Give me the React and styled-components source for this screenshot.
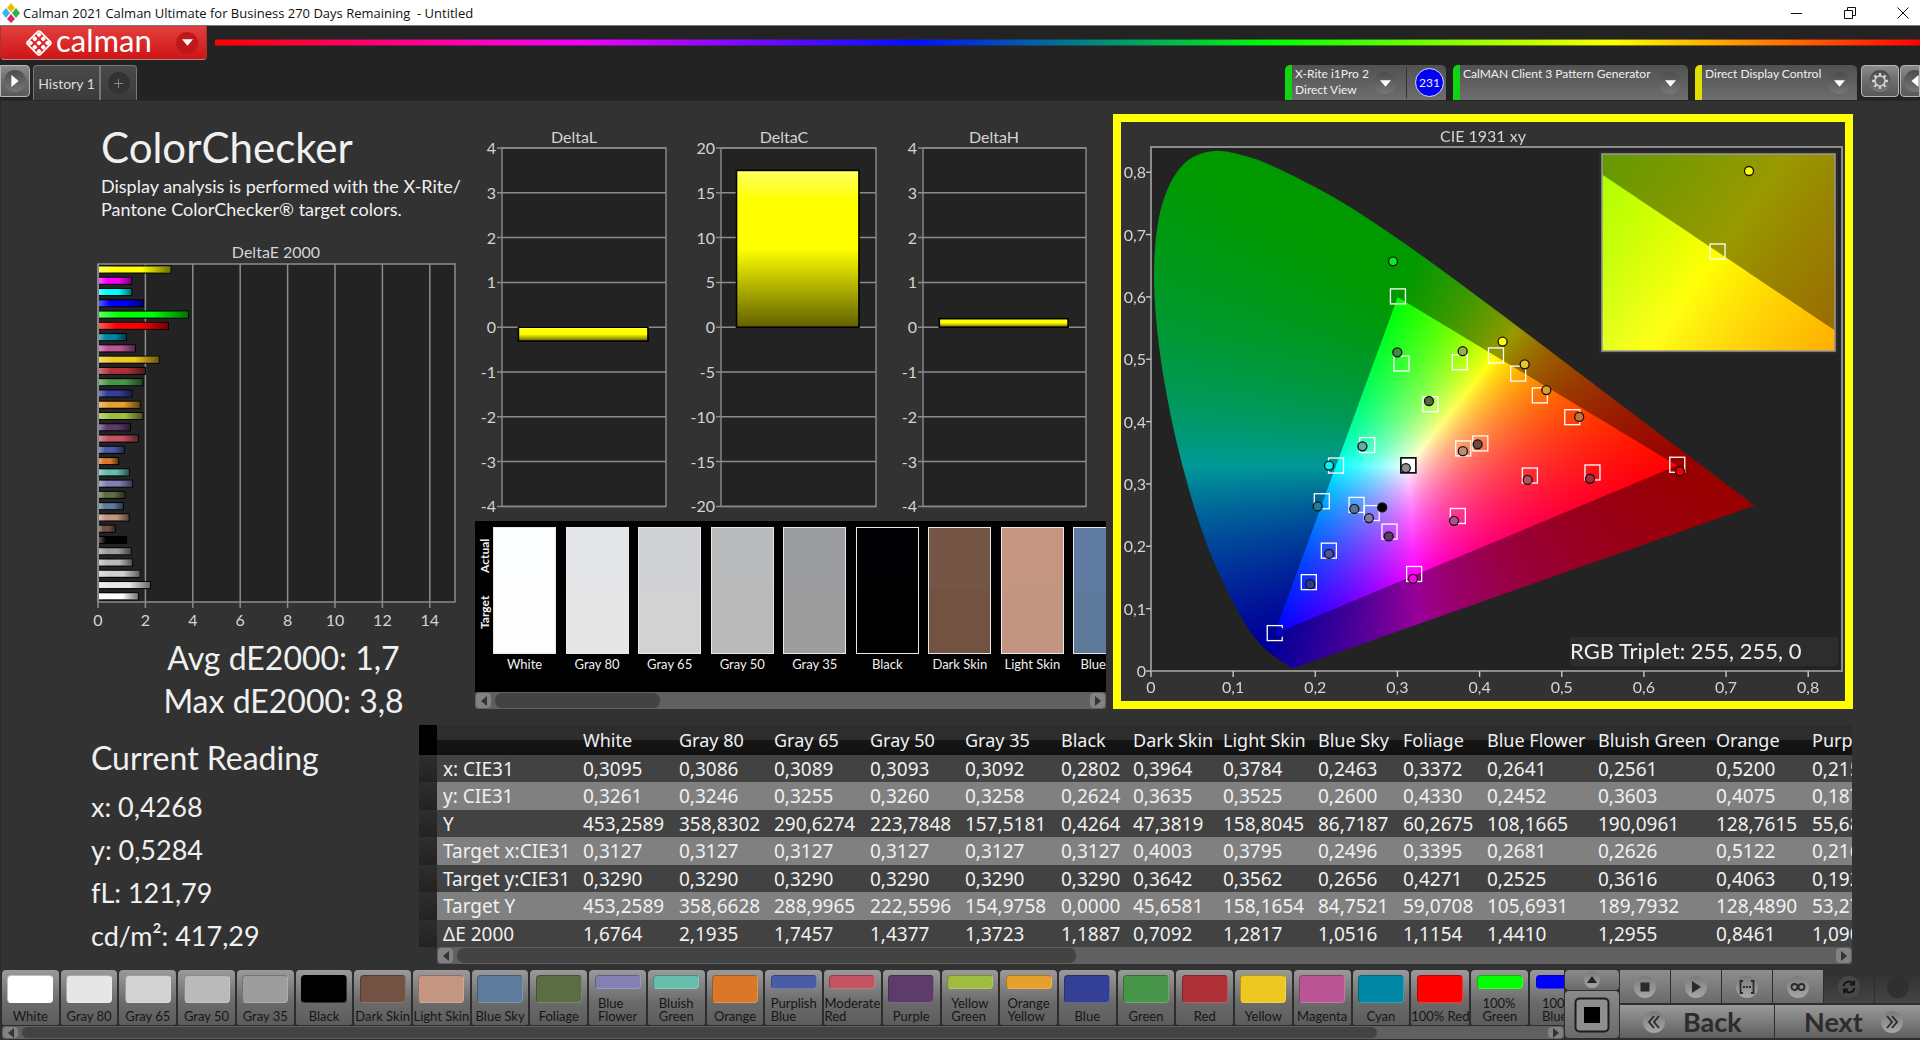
import React, { useEffect, useRef } from 'react';
import styled, { createGlobalStyle, css } from 'styled-components';

const GlobalStyle = createGlobalStyle`
  * { box-sizing: border-box; }
  html, body, #root { height: 100%; }
  body {
    margin: 0;
    background: #323232;
    color: #f0f0f0;
    font-family: 'Lato', 'Liberation Sans', sans-serif;
    overflow: hidden;
  }
  button { font: inherit; color: inherit; border: 0; padding: 0; margin: 0; background: none; }
`;

/* ---------- data ---------- */

const PATCHES = [
  { name: 'White', color: '#ffffff', actual: '#fcfdff', target: '#fdfdfd', de: 1.6764 },
  { name: 'Gray 80', color: '#e6e6e6', actual: '#e4e5e8', target: '#e6e6e6', de: 2.1935 },
  { name: 'Gray 65', color: '#d2d2d2', actual: '#d0d1d5', target: '#d2d2d2', de: 1.7457 },
  { name: 'Gray 50', color: '#bababa', actual: '#b9bbbc', target: '#bababa', de: 1.4377 },
  { name: 'Gray 35', color: '#9d9d9d', actual: '#9c9da1', target: '#9d9d9d', de: 1.3723 },
  { name: 'Black', color: '#000000', actual: '#010104', target: '#000000', de: 1.1887 },
  { name: 'Dark Skin', color: '#735244', actual: '#755546', target: '#735242', de: 0.7092 },
  { name: 'Light Skin', color: '#c49682', actual: '#c49682', target: '#c29582', de: 1.2817 },
  { name: 'Blue Sky', color: '#5e7b9d', actual: '#5f7ba2', target: '#5e7a9b', de: 1.0516 },
  { name: 'Foliage', color: '#5a6d43', de: 1.1154 },
  { name: 'Blue Flower', color: '#8380b2', de: 1.441, small: true },
  { name: 'Bluish Green', color: '#64beab', de: 1.2955, small: true },
  { name: 'Orange', color: '#d97828', de: 0.8461 },
  { name: 'Purplish Blue', color: '#4a5ba7', de: 1.09, small: true },
  { name: 'Moderate Red', color: '#c35361', de: 1.68, small: true },
  { name: 'Purple', color: '#5d3c6c', de: 1.35 },
  { name: 'Yellow Green', color: '#a0bc40', de: 1.87, small: true },
  { name: 'Orange Yellow', color: '#e6a12d', de: 1.75, small: true },
  { name: 'Blue', color: '#343f96', de: 1.42 },
  { name: 'Green', color: '#479549', de: 1.87 },
  { name: 'Red', color: '#b03038', de: 1.98 },
  { name: 'Yellow', color: '#edc821', de: 2.55 },
  { name: 'Magenta', color: '#bb5594', de: 1.56 },
  { name: 'Cyan', color: '#0087a5', de: 1.18 },
  { name: '100% Red', color: '#ff0000', de: 2.95 },
  { name: '100% Green', color: '#00ff00', de: 3.8, small: true },
  { name: '100% Blue', color: '#0000ff', de: 1.9, small: true },
  { name: '100% Cyan', color: '#00ffff', de: 1.4, small: true },
  { name: '100% Magenta', color: '#ff00ff', de: 1.4, small: true },
  { name: '100% Yellow', color: '#ffff00', de: 3.05, small: true },
];

const COLUMNS = [
  { name: 'White', width: 96 },
  { name: 'Gray 80', width: 95 },
  { name: 'Gray 65', width: 96 },
  { name: 'Gray 50', width: 95 },
  { name: 'Gray 35', width: 96 },
  { name: 'Black', width: 72 },
  { name: 'Dark Skin', width: 90 },
  { name: 'Light Skin', width: 95 },
  { name: 'Blue Sky', width: 85 },
  { name: 'Foliage', width: 84 },
  { name: 'Blue Flower', width: 111 },
  { name: 'Bluish Green', width: 118 },
  { name: 'Orange', width: 96 },
  { name: 'Purplish Blue', width: 120 },
];

const ROWS = [
  ['x: CIE31', '0,3095', '0,3086', '0,3089', '0,3093', '0,3092', '0,2802', '0,3964', '0,3784', '0,2463', '0,3372', '0,2641', '0,2561', '0,5200', '0,2155'],
  ['y: CIE31', '0,3261', '0,3246', '0,3255', '0,3260', '0,3258', '0,2624', '0,3635', '0,3525', '0,2600', '0,4330', '0,2452', '0,3603', '0,4075', '0,1878'],
  ['Y', '453,2589', '358,8302', '290,6274', '223,7848', '157,5181', '0,4264', '47,3819', '158,8045', '86,7187', '60,2675', '108,1665', '190,0961', '128,7615', '55,6841'],
  ['Target x:CIE31', '0,3127', '0,3127', '0,3127', '0,3127', '0,3127', '0,3127', '0,4003', '0,3795', '0,2496', '0,3395', '0,2681', '0,2626', '0,5122', '0,2164'],
  ['Target y:CIE31', '0,3290', '0,3290', '0,3290', '0,3290', '0,3290', '0,3290', '0,3642', '0,3562', '0,2656', '0,4271', '0,2525', '0,3616', '0,4063', '0,1922'],
  ['Target Y', '453,2589', '358,6628', '288,9965', '222,5596', '154,9758', '0,0000', '45,6581', '158,1654', '84,7521', '59,0708', '105,6931', '189,7932', '128,4890', '53,2718'],
  ['ΔE 2000', '1,6764', '2,1935', '1,7457', '1,4377', '1,3723', '1,1887', '0,7092', '1,2817', '1,0516', '1,1154', '1,4410', '1,2955', '0,8461', '1,0902'],
];

const LOCUS = [
  [0.1741, 0.005], [0.1714, 0.0051], [0.1644, 0.0109], [0.1566, 0.0177], [0.144, 0.0297],
  [0.1355, 0.0399], [0.1241, 0.0578], [0.1096, 0.0868], [0.0913, 0.1327], [0.0687, 0.2007],
  [0.0454, 0.295], [0.0235, 0.4127], [0.0082, 0.5384], [0.0039, 0.6548], [0.0139, 0.7502],
  [0.0389, 0.812], [0.0743, 0.8338], [0.1142, 0.8262], [0.1547, 0.8059], [0.2296, 0.7543],
  [0.3016, 0.6923], [0.3731, 0.6245], [0.4441, 0.5547], [0.5125, 0.4866], [0.5752, 0.4242],
  [0.627, 0.3725], [0.6658, 0.334], [0.6915, 0.3083], [0.719, 0.2809], [0.7347, 0.2653],
];

const TARGETS = [
  [0.3, 0.6], [0.3043, 0.4924], [0.3753, 0.4943], [0.4193, 0.5053], [0.3395, 0.4271],
  [0.4003, 0.3642], [0.3795, 0.3562], [0.2626, 0.3616], [0.2246, 0.3287], [0.2073, 0.2715],
  [0.2496, 0.2656], [0.2681, 0.2525], [0.2897, 0.2228], [0.3729, 0.2478], [0.2159, 0.1922],
  [0.1915, 0.1417], [0.3197, 0.1548], [0.15, 0.06], [0.4463, 0.4762], [0.4727, 0.4412],
  [0.5122, 0.4063], [0.64, 0.33], [0.4606, 0.3127], [0.5368, 0.3176],
];

const READINGS = [
  [0.2934, 0.6571, '#00f020'], [0.2986, 0.5111, '#3f8b45'], [0.3782, 0.513, '#9aae45'],
  [0.4268, 0.5284, '#ffff00'], [0.3372, 0.433, '#55663f'], [0.2561, 0.3603, '#64ab98'],
  [0.2155, 0.3295, '#00f5f5'], [0.2017, 0.264, '#14809c'], [0.2463, 0.26, '#5a7594'],
  [0.2641, 0.2452, '#7e7ba8'], [0.2802, 0.2624, '#000000'], [0.2881, 0.2159, '#59386a'],
  [0.3676, 0.2409, '#b14f8c'], [0.2155, 0.1878, '#47559d'], [0.1927, 0.1392, '#30398a'],
  [0.3177, 0.1479, '#ff00f0'], [0.1554, 0.0618, '#0000f0'], [0.309, 0.3255, '#8f8f8f'],
  [0.3964, 0.3635, '#6d4d41'], [0.3784, 0.3525, '#bb8f7c'], [0.4536, 0.4918, '#e6c32b'],
  [0.48, 0.4506, '#dd9c30'], [0.52, 0.4075, '#cc7230'], [0.6427, 0.3201, '#ee0000'],
  [0.4573, 0.3064, '#ba4f5d'], [0.5332, 0.3083, '#a82d36'],
];

/* ---------- shared parts ---------- */

const roundShade = css`
  display: inline-flex;
  align-items: center;
  justify-content: center;
  flex: none;
  border-radius: 50%;
`;

const Round = styled.span`
  ${roundShade}
  width: ${(p) => p.$size || 22}px;
  height: ${(p) => p.$size || 22}px;
  margin-left: ${(p) => (p.$end ? 'auto' : '0')};
  background: ${(p) => p.$bg || 'linear-gradient(#4c4c4c, #777)'};
`;

const Track = styled.div`
  display: flex;
  align-items: center;
  gap: 4px;
  height: ${(p) => p.$height || 17}px;
  background: #606060;
  border-radius: 3px;
  padding: 1px;
`;

const TrackButton = styled.button`
  display: flex;
  align-items: center;
  justify-content: center;
  width: 15px;
  height: 100%;
  border-radius: 4px;
  background: #828282;
`;

const TrackRail = styled.div`
  flex: 1;
  height: 100%;
`;

const Thumb = styled.div`
  width: ${(p) => p.$size}%;
  height: 100%;
  border-radius: 7px;
  background: #434343;
`;

function Caret({ dir, size = 10, fill = '#fff' }) {
  const points = {
    down: '0,2 10,2 5,8',
    up: '0,8 10,8 5,1',
    left: '8,0 8,10 2,5',
    right: '2,0 2,10 8,5',
  };
  return (
    <svg width={size} height={size} viewBox="0 0 10 10" aria-hidden="true">
      <polygon points={points[dir]} fill={fill} />
    </svg>
  );
}

function ScrollBar({ label, size, height }) {
  return (
    <Track $height={height}>
      <TrackButton type="button" aria-label={`${label} left`}><Caret dir="left" fill="#333" /></TrackButton>
      <TrackRail><Thumb $size={size} /></TrackRail>
      <TrackButton type="button" aria-label={`${label} right`}><Caret dir="right" fill="#333" /></TrackButton>
    </Track>
  );
}

/* ---------- window chrome ---------- */

const Page = styled.div`
  display: flex;
  flex-direction: column;
  min-height: 100%;
  overflow: hidden;
`;

const TitleBar = styled.header`
  display: flex;
  align-items: center;
  height: 25px;
  padding-left: 2px;
  gap: 3px;
  background: #fff;
  color: #111;
  font-family: 'Open Sans', 'Noto Sans', sans-serif;
  font-size: 13px;
  white-space: pre;
`;

const WindowButtons = styled.div`
  display: flex;
  gap: 19px;
  margin-left: auto;
  button {
    width: 34px;
    height: 25px;
    display: flex;
    align-items: center;
    justify-content: center;
  }
`;

const Ribbon = styled.div`
  display: grid;
  grid-template-columns: 207px 1fr;
  column-gap: 8px;
  height: 36px;
  background: #232323;
  border-top: 1px solid #777;
`;

const Brand = styled.button`
  display: flex;
  align-items: center;
  height: 34px;
  padding: 0 8px 0 24px;
  gap: 3px;
  border: 1px solid #a33;
  border-top: 0;
  border-bottom: 1px solid #a88;
  border-radius: 0 0 4px 4px;
  background: linear-gradient(#e2403f, #cf1414);
`;

const Spectrum = styled.div`
  align-self: start;
  margin-top: 13px;
  height: 7px;
  border: 1px solid rgba(40, 40, 40, 0.6);
  border-width: 1px 0;
  background: linear-gradient(90deg, #ff0000 0%, #ff00d0 17%, #f000ff 22%, #0010ff 41%, #00ff00 62%, #ffff00 82%, #ff0000 100%);
`;

const TabBar = styled.div`
  display: flex;
  align-items: flex-start;
  height: 39px;
  padding-top: 4px;
  background: #232323;
`;

const SideButton = styled.button`
  display: flex;
  align-items: center;
  justify-content: ${(p) => (p.$cut ? 'flex-start' : 'center')};
  width: ${(p) => p.$width}px;
  height: 32px;
  padding-left: ${(p) => (p.$cut ? 3 : 0)}px;
  margin-left: ${(p) => p.$gap || 0}px;
  overflow: hidden;
  border: 1px solid #b5b5b5;
  border-radius: ${(p) => p.$radius || '4px'};
  background: linear-gradient(#8c8c8c, #6b6b6b 50%, #5a5a5a);
`;

const Tab = styled.button`
  display: flex;
  align-items: center;
  justify-content: center;
  width: ${(p) => p.$width}px;
  height: 35px;
  border: 1px solid #777;
  border-bottom: 0;
  border-radius: ${(p) => p.$radius};
  margin-left: ${(p) => p.$gap || 0}px;
  background: linear-gradient(#4a4a4a, #3a3a3a);
  color: #dcdcdc;
  font-size: 14px;
`;

const Devices = styled.div`
  display: flex;
  margin-left: auto;
  gap: 7px;
`;

const Device = styled.button`
  display: flex;
  width: ${(p) => p.$width}px;
  height: 35px;
  border-radius: 5px 5px 0 0;
  overflow: hidden;
  border-left: 7px solid ${(p) => p.$accent};
  background: linear-gradient(#515151, #6e6e6e);
  padding: 1px 7px 0 3px;
  font-size: 12px;
  line-height: 16px;
  text-align: left;
  white-space: pre;
  > span:nth-child(2) { margin-left: auto; margin-top: 6px; }
`;

const Count = styled.span`
  display: flex;
  align-items: center;
  height: 31px;
  margin: 1px -5px 0 10px;
  padding-left: 8px;
  border-left: 1px solid #333;
  b {
    ${roundShade}
    width: 29px;
    height: 29px;
    border: 1px solid #dde;
    background: #0000f5;
    font-size: 12px;
    font-weight: 400;
  }
`;

function BrandMark() {
  const cells = [];
  for (let r = 0; r < 3; r += 1) {
    for (let c = 0; c < 3; c += 1) {
      cells.push(<rect key={`${r}-${c}`} x={r * 6 - 8} y={c * 6 - 8} width="4" height="4" rx="1" fill="#fff" />);
    }
  }
  return (
    <svg width="28" height="28" viewBox="-14 -14 28 28" aria-hidden="true">
      <g transform="rotate(45)">
        <rect x="-9" y="-9" width="18" height="18" rx="2" fill="none" stroke="#fff" strokeWidth="1.6" />
        {cells}
      </g>
    </svg>
  );
}

const BrandName = styled.span`
  font-size: 31px;
  line-height: 28px;
  margin-top: -6px;
  color: #fff;
`;

/* ---------- charts ---------- */

const Chart = styled.svg`
  display: block;
  width: 100%;
  height: auto;
  text { font-family: 'Lato', 'Liberation Sans', sans-serif; fill: #d4d4d4; font-size: 16px; }
`;

const Triplet = styled.text`
  && { font-size: 22px; fill: #f0f0f0; }
`;

function DeltaEChart() {
  const left = 98;
  const unit = 23.7;
  const bars = [...PATCHES].reverse();
  return (
    <Chart viewBox="0 0 475 398" role="img" aria-label="DeltaE 2000">
      <defs>
        <linearGradient id="barShade">
          <stop offset="0" stopColor="#fff" stopOpacity="0.35" />
          <stop offset="0.25" stopColor="#fff" stopOpacity="0" />
          <stop offset="0.6" stopColor="#000" stopOpacity="0" />
          <stop offset="1" stopColor="#000" stopOpacity="0.55" />
        </linearGradient>
      </defs>
      <text x="276" y="23" textAnchor="middle">DeltaE 2000</text>
      <rect x={left} y="29" width="357" height="338" fill="#232323" stroke="#8c8c8c" strokeWidth="1.5" />
      {[0, 2, 4, 6, 8, 10, 12, 14].map((v) => (
        <g key={v}>
          <line x1={left + v * unit} x2={left + v * unit} y1="29" y2="373" stroke="#8c8c8c" strokeWidth="1.5" />
          <text x={left + v * unit} y="391" textAnchor="middle">{v}</text>
        </g>
      ))}
      {bars.map((b, i) => {
        const y = 30.5 + i * 11.27;
        return (
          <g key={b.name}>
            <rect x={left + 1} y={y} width={b.de * unit} height="8" fill="#000" />
            <rect x={left + 1} y={y + 1} width={b.de * unit - 1} height="6" fill={b.color} />
            <rect x={left + 1} y={y + 1} width={b.de * unit - 1} height="6" fill="url(#barShade)" />
          </g>
        );
      })}
    </Chart>
  );
}

const DELTAS = [
  { name: 'DeltaL', x: 27, width: 164, title: 99, step: 1, value: -0.31 },
  { name: 'DeltaC', x: 246, width: 155, title: 309, step: 5, value: 17.5 },
  { name: 'DeltaH', x: 448, width: 163, title: 519, step: 1, value: 0.19 },
];

function DeltaCharts() {
  const top = 28;
  const pitch = 44.8;
  return (
    <Chart viewBox="0 0 631 401" role="img" aria-label="DeltaL, DeltaC and DeltaH">
      <defs>
        <linearGradient id="columnShade" x2="0" y2="1">
          <stop offset="0" stopColor="#ffff60" />
          <stop offset="0.2" stopColor="#ffff00" />
          <stop offset="0.5" stopColor="#ffff00" />
          <stop offset="1" stopColor="#606000" />
        </linearGradient>
      </defs>
      {DELTAS.map((d) => {
        const zero = top + 4 * pitch;
        const h = (Math.abs(d.value) / d.step) * pitch;
        return (
          <g key={d.name}>
            <text x={d.title} y="23" textAnchor="middle">{d.name}</text>
            <rect x={d.x} y={top} width={d.width} height={pitch * 8} fill="#232323" stroke="#8c8c8c" strokeWidth="1.4" />
            {[4, 3, 2, 1, 0, -1, -2, -3, -4].map((v) => {
              const y = top + (4 - v) * pitch;
              return (
                <g key={v}>
                  <line x1={d.x - 5} x2={d.x + d.width} y1={y} y2={y} stroke="#8c8c8c" strokeWidth="1.5" />
                  <text x={d.x - 6} y={y + 6} textAnchor="end">{v * d.step}</text>
                </g>
              );
            })}
            <rect
              x={d.x + d.width * 0.1}
              y={d.value > 0 ? zero - h : zero}
              width={d.width * 0.79}
              height={h}
              fill="url(#columnShade)"
              stroke="#000"
              strokeWidth="1.6"
            />
          </g>
        );
      })}
    </Chart>
  );
}

/* xy chromaticity to display colour; outside the Rec. 709 triangle it is dimmed */
function xyToRgb(x, y) {
  const z = 1 - x - y;
  const lin = [
    3.2406 * x - 1.5372 * y - 0.4986 * z,
    -0.9689 * x + 1.8758 * y + 0.0415 * z,
    0.0557 * x - 0.204 * y + 1.057 * z,
  ];
  const inside = Math.min(...lin) >= 0;
  const max = Math.max(...lin);
  return lin.map((c) => (Math.max(0, c) / max) * (inside ? 255 : 153));
}

const CIE = { w: 724, h: 579, x0: 30, y0: 549, sx: 821.5, sy: 623.5 };
const INSET = { x: 481, y: 32, w: 233, h: 197, cx: 597, cy: 130, sx: 4150, sy: 3500 };
const px = (x) => CIE.x0 + x * CIE.sx;
const py = (y) => CIE.y0 - y * CIE.sy;

function paint(ctx, w, h, toXY) {
  const image = ctx.createImageData(w, h);
  for (let j = 0; j < h; j += 1) {
    for (let i = 0; i < w; i += 1) {
      const [x, y] = toXY(i / 2, j / 2);
      const rgb = xyToRgb(x, y);
      const at = (j * w + i) * 4;
      image.data[at] = rgb[0];
      image.data[at + 1] = rgb[1];
      image.data[at + 2] = rgb[2];
      image.data[at + 3] = 255;
    }
  }
  return image;
}

const Panel = styled.section`
  border: 8px solid #ffff00;
  background: #323232;
`;

const Stage = styled.div`
  display: grid;
  > * { grid-area: 1 / 1; width: 100%; height: auto; }
`;

function CieChart() {
  const ref = useRef(null);

  useEffect(() => {
    const ctx = ref.current.getContext('2d');
    const w = CIE.w * 2;
    const h = CIE.h * 2;
    ctx.clearRect(0, 0, w, h);
    ctx.putImageData(paint(ctx, w, h, (i, j) => [(i - CIE.x0) / CIE.sx, (CIE.y0 - j) / CIE.sy]), 0, 0);

    // keep only what the spectral locus encloses
    ctx.globalCompositeOperation = 'destination-in';
    ctx.beginPath();
    const pts = LOCUS.map(([x, y]) => [px(x) * 2, py(y) * 2]);
    ctx.moveTo(...pts[0]);
    for (let k = 0; k < pts.length - 1; k += 1) {
      const p0 = pts[Math.max(k - 1, 0)];
      const p1 = pts[k];
      const p2 = pts[k + 1];
      const p3 = pts[Math.min(k + 2, pts.length - 1)];
      ctx.bezierCurveTo(
        p1[0] + (p2[0] - p0[0]) / 6, p1[1] + (p2[1] - p0[1]) / 6,
        p2[0] - (p3[0] - p1[0]) / 6, p2[1] - (p3[1] - p1[1]) / 6,
        p2[0], p2[1],
      );
    }
    ctx.closePath();
    ctx.fill();
    ctx.globalCompositeOperation = 'source-over';

    ctx.putImageData(paint(ctx, INSET.w * 2, INSET.h * 2, (i, j) => [
      0.4193 + (INSET.x + i - INSET.cx) / INSET.sx,
      0.5053 - (INSET.y + j - INSET.cy) / INSET.sy,
    ]), INSET.x * 2, INSET.y * 2);
  }, []);

  return (
    <Panel>
      <Stage>
        <Chart viewBox="0 0 724 579" aria-hidden="true">
          <rect x="30" y="25" width="691" height="524" fill="#232323" />
          <rect x="478" y="29" width="239" height="203" fill="#2b2b2b" />
        </Chart>
        <canvas ref={ref} width={CIE.w * 2} height={CIE.h * 2} />
        <Chart viewBox="0 0 724 579" role="img" aria-label="CIE 1931 xy">
          <text x="362" y="20" textAnchor="middle">CIE 1931 xy</text>
          <rect x="30" y="25" width="691" height="524" fill="none" stroke="#8c8c8c" strokeWidth="2" />
          {[0, 1, 2, 3, 4, 5, 6, 7, 8].map((v) => (
            <g key={v} stroke="#c8c8c8" strokeWidth="1.4">
              <line x1={px(v / 10)} x2={px(v / 10)} y1="549" y2="555" />
              <line x1="25" x2="30" y1={py(v / 10)} y2={py(v / 10)} />
              <text x={px(v / 10)} y="571" textAnchor="middle" stroke="none">{v ? `0,${v}` : 0}</text>
              <text x="25" y={py(v / 10) + 6} textAnchor="end" stroke="none">{v ? `0,${v}` : 0}</text>
            </g>
          ))}
          <rect x={INSET.x} y={INSET.y} width={INSET.w} height={INSET.h} fill="none" stroke="#999" strokeWidth="1.5" />
          <rect x="589" y="122" width="15" height="15" fill="none" stroke="#fff" strokeWidth="1.3" />
          <circle cx="628" cy="49" r="4.5" fill="#ffff00" stroke="#111" strokeWidth="1.3" />
          {TARGETS.map(([x, y]) => (
            <rect key={`${x}-${y}`} x={px(x) - 7} y={py(y) - 8} width="15" height="15" fill="none" stroke="#fff" strokeWidth="1.3" />
          ))}
          <rect x={px(0.3127) - 7} y={py(0.329) - 8} width="15" height="15" fill="#fff" stroke="#000" strokeWidth="1.6" />
          {READINGS.map(([x, y, c]) => (
            <circle key={`${x}-${y}`} cx={px(x) + 1} cy={py(y)} r="4.5" fill={c} stroke="#111" strokeWidth="1.3" />
          ))}
          <rect x="449" y="515" width="268" height="29" fill="#2d2d2d" />
          <Triplet x="449" y="537">RGB Triplet: 255, 255, 0</Triplet>
        </Chart>
      </Stage>
    </Panel>
  );
}

/* ---------- main area ---------- */

const Main = styled.main`
  flex: 1;
  display: flex;
  flex-direction: column;
  gap: 3px;
  padding: 14px 0 6px;
  box-shadow: inset 1px 1px #282828;
`;

const Upper = styled.div`
  display: grid;
  grid-template-columns: 475fr 631fr 7px 740fr 67fr;
  align-items: start;
`;

const Lower = styled.div`
  display: grid;
  grid-template-columns: 419fr 1433fr 68fr;
  align-items: start;
`;

const Intro = styled.div`
  padding: 5px 0 0 101px;
  height: 121px;
  h1 { margin: 0; font-size: 42px; line-height: 56px; font-weight: 400; }
  p { margin: 0; font-size: 18px; line-height: 23px; white-space: nowrap; }
`;

const Totals = styled.p`
  margin: 3px 0 0 92px;
  text-align: center;
  font-size: 32px;
  line-height: 43px;
`;

const Reading = styled.section`
  padding: 10px 0 0 91px;
  h2 { margin: 0 0 4px; font-size: 32px; line-height: 46px; font-weight: 400; }
  p { margin: 0; font-size: 27px; line-height: 43px; }
`;

const Middle = styled.div`
  padding-top: 6px;
  min-width: 0;
`;

const Strip = styled.div`
  display: flex;
  height: 171px;
  overflow: hidden;
  background: #000;
  padding-top: 6px;
`;

const StripAxis = styled.div`
  flex: none;
  display: flex;
  flex-direction: row-reverse;
  justify-content: space-around;
  align-items: center;
  writing-mode: vertical-rl;
  transform: rotate(180deg);
  width: 18px;
  height: 124px;
  font-size: 12px;
  font-weight: 700;
  padding: 10px 0 0;
`;

const Swatch = styled.figure`
  flex: 0 0 10%;
  margin: 0 1.5% 0 0;
  font-size: 13px;
  line-height: 16px;
  text-align: center;
  white-space: nowrap;
  &::before {
    content: '';
    display: block;
    height: 125px;
    border: 1px solid #e8e8e8;
    margin-bottom: 2px;
    background: linear-gradient(${(p) => p.$actual} 50%, ${(p) => p.$target} 50%);
  }
`;

const TableBox = styled.div`
  min-width: 0;
`;

const TableClip = styled.div`
  overflow: hidden;
`;

const Table = styled.table`
  table-layout: fixed;
  width: 1507px;
  border-collapse: collapse;
  font-family: 'Noto Sans', 'Open Sans', sans-serif;
  font-size: 19px;
  line-height: 20px;
  white-space: nowrap;
  th, td { padding: 0 0 0 6px; text-align: left; font-weight: 400; overflow: hidden; }
  thead tr { height: 30px; background: linear-gradient(#2d2d2d 50%, #161616 50%, #111); }
  thead th { font-size: 18px; }
  thead td:first-child { background: #000; }
  tbody tr { height: 27px; background: #424242; }
  tbody tr:nth-child(even) { height: 28px; background: #808080; }
  tbody td:first-child { background: linear-gradient(#2e2e2e, #222); }
`;

const TableScroll = styled.div`
  margin-left: 18px;
`;

/* ---------- bottom bar ---------- */

const Bottom = styled.footer`
  display: grid;
  grid-template-columns: minmax(0, 1fr) 55px 301px;
  height: 70px;
  background: #2e2e2e;
`;

const PatchArea = styled.div`
  min-width: 0;
  padding-left: 2px;
`;

const PatchRow = styled.div`
  display: flex;
  gap: 2px;
  overflow: hidden;
  height: 56px;
`;

const Patch = styled.button`
  flex: 0 0 calc(100% / 26.6 - 2px);
  display: flex;
  flex-direction: column;
  align-items: center;
  justify-content: space-between;
  height: 55px;
  padding: 5px 0 2px;
  border-radius: 4px 4px 2px 2px;
  background: linear-gradient(#9a9a9a, #6a6a6a 60%, #5c5c5c);
  color: #161616;
  font-size: 13px;
  line-height: 13px;
  text-align: left;
  i {
    display: block;
    width: 46px;
    height: ${(p) => (p.$small ? 14 : 28)}px;
    border-radius: 4px;
    border: 1px solid rgba(0, 0, 0, 0.25);
    border-right-color: rgba(255, 255, 255, 0.2);
    border-bottom-color: rgba(255, 255, 255, 0.2);
    background: ${(p) => p.$color};
  }
  span { white-space: ${(p) => (p.$small ? 'pre' : 'nowrap')}; }
`;

const StopColumn = styled.div`
  display: grid;
  grid-template-rows: 20px 47px;
  row-gap: 1px;
  margin-left: 1px;
  button {
    display: flex;
    align-items: center;
    justify-content: center;
    border-radius: 4px;
    background: linear-gradient(#8a8a8a, #6a6a6a);
  }
`;

const Transport = styled.div`
  display: grid;
  grid-template-rows: 33px 33px;
  row-gap: 2px;
  padding-left: 1px;
`;

const TransportRow = styled.div`
  display: grid;
  grid-template-columns: ${(p) => p.$columns};
  column-gap: 1px;
  overflow: hidden;
`;

const TransportButton = styled.button`
  display: flex;
  align-items: center;
  justify-content: center;
  background: ${(p) => (p.$off ? 'linear-gradient(#303030, #444)' : 'linear-gradient(#8e8e8e, #6a6a6a)')};
`;

const StepButton = styled.button`
  display: flex;
  align-items: center;
  gap: 18px;
  padding-left: ${(p) => (p.$forward ? 29 : 23)}px;
  background: linear-gradient(#9a9a9a, #5f5f5f);
  color: #2c2c2c;
  font-size: 27px;
  line-height: 30px;
  font-weight: 700;
`;

const lightDisc = 'linear-gradient(#7a7a7a, #a8a8a8)';

function Glyph({ children }) {
  return (
    <svg width="16" height="16" viewBox="0 0 16 16" fill="none" stroke="#2a2a2a" strokeWidth="1.8" aria-hidden="true">
      {children}
    </svg>
  );
}

export default function App() {
  return (
    <Page>
      <GlobalStyle />
      <TitleBar>
        <svg width="18" height="22" viewBox="0 0 18 22" aria-hidden="true">
          <path d="M9 1l4 5-4 4-4-4z" fill="#f5b800" />
          <path d="M4 6l4 5-4 5-4-5z" fill="#35b6e8" />
          <path d="M14 6l4 5-4 5-4-5z" fill="#2fb34a" />
          <path d="M9 12l4 5-4 4-4-4z" fill="#e0245e" />
        </svg>
        {'Calman 2021 Calman Ultimate for Business 270 Days Remaining  - Untitled'}
        <WindowButtons>
          <button type="button" aria-label="Minimize">
            <svg width="12" height="12" stroke="#111"><path d="M0 6.5h11" /></svg>
          </button>
          <button type="button" aria-label="Restore">
            <svg width="12" height="12" stroke="#111" fill="none"><path d="M.5 3.5h8v8h-8zM3.5 3.5v-3h8v8h-3" /></svg>
          </button>
          <button type="button" aria-label="Close">
            <svg width="12" height="12" stroke="#111"><path d="M.5.5l11 11M11.5.5l-11 11" /></svg>
          </button>
        </WindowButtons>
      </TitleBar>

      <Ribbon>
        <Brand type="button" aria-label="Calman menu">
          <BrandMark />
          <BrandName>calman</BrandName>
          <Round $bg="#c01818" $end><Caret dir="down" size={11} /></Round>
        </Brand>
        <Spectrum />
      </Ribbon>

      <TabBar>
        <SideButton type="button" aria-label="Expand" $width={30} $radius="0 4px 4px 0">
          <Round><Caret dir="right" size={12} /></Round>
        </SideButton>
        <Tab type="button" $width={67} $gap={3} $radius="4px 0 0 0">History 1</Tab>
        <Tab type="button" aria-label="Add tab" $width={37} $radius="0 4px 0 0">
          <Round $bg="#333"><svg width="9" height="9" stroke="#888"><path d="M0 4.5h9M4.5 0v9" /></svg></Round>
        </Tab>
        <Devices>
          <Device type="button" $width={161} $accent="#0fd60f">
            <span>{'X-Rite i1Pro 2\nDirect View'}</span>
            <Round><Caret dir="down" size={11} /></Round>
            <Count><b>231</b></Count>
          </Device>
          <Device type="button" $width={235} $accent="#0fd60f">
            <span>CalMAN Client 3 Pattern Generator</span>
            <Round><Caret dir="down" size={11} /></Round>
          </Device>
          <Device type="button" $width={162} $accent="#e0e000">
            <span>Direct Display Control</span>
            <Round><Caret dir="down" size={11} /></Round>
          </Device>
        </Devices>
        <SideButton type="button" aria-label="Settings" $width={38} $gap={4}>
          <Round>
            <svg width="18" height="18" viewBox="-9 -9 18 18" fill="none" stroke="#d0d0d0" strokeWidth="1.6" aria-hidden="true">
              <circle r="5" />
              {[0, 45, 90, 135, 180, 225, 270, 315].map((a) => (
                <path key={a} d="M0-5v-3" transform={`rotate(${a})`} strokeWidth="2.4" />
              ))}
            </svg>
          </Round>
        </SideButton>
        <SideButton type="button" aria-label="Collapse" $width={20} $gap={1} $cut $radius="4px 0 0 4px">
          <Round><Caret dir="left" size={12} /></Round>
        </SideButton>
      </TabBar>

      <Main>
        <Upper>
          <div>
            <Intro>
              <h1>ColorChecker</h1>
              <p>
                Display analysis is performed with the X-Rite/
                <br />
                Pantone ColorChecker® target colors.
              </p>
            </Intro>
            <DeltaEChart />
            <Totals>
              Avg dE2000: 1,7
              <br />
              Max dE2000: 3,8
            </Totals>
          </div>
          <Middle>
            <DeltaCharts />
            <Strip>
              <StripAxis>
                <span>Actual</span>
                <span>Target</span>
              </StripAxis>
              {PATCHES.slice(0, 9).map((p) => (
                <Swatch key={p.name} $actual={p.actual} $target={p.target}>{p.name}</Swatch>
              ))}
            </Strip>
            <ScrollBar label="Scroll patches" size={28} />
          </Middle>
          <span />
          <CieChart />
        </Upper>

        <Lower>
          <Reading>
            <h2>Current Reading</h2>
            <p>x: 0,4268</p>
            <p>y: 0,5284</p>
            <p>fL: 121,79</p>
            <p>cd/m²: 417,29</p>
          </Reading>
          <TableBox>
            <TableClip>
              <Table>
                <colgroup>
                  <col style={{ width: 18 }} />
                  <col style={{ width: 140 }} />
                  {COLUMNS.map((c) => <col key={c.name} style={{ width: c.width }} />)}
                </colgroup>
                <thead>
                  <tr>
                    <td />
                    <td />
                    {COLUMNS.map((c) => <th key={c.name} scope="col">{c.name}</th>)}
                  </tr>
                </thead>
                <tbody>
                  {ROWS.map(([label, ...values]) => (
                    <tr key={label}>
                      <td />
                      <th scope="row">{label}</th>
                      {values.map((v, i) => <td key={COLUMNS[i].name}>{v}</td>)}
                    </tr>
                  ))}
                </tbody>
              </Table>
            </TableClip>
            <TableScroll>
              <ScrollBar label="Scroll table" size={45} />
            </TableScroll>
          </TableBox>
        </Lower>
      </Main>

      <Bottom>
        <PatchArea>
          <PatchRow>
            {PATCHES.slice(0, 27).map((p) => (
              <Patch key={p.name} type="button" $color={p.color} $small={p.small}>
                <i />
                <span>{p.small ? p.name.replace(' ', '\n') : p.name}</span>
              </Patch>
            ))}
          </PatchRow>
          <ScrollBar label="Scroll pattern list" size={89} height={13} />
        </PatchArea>
        <StopColumn>
          <button type="button" aria-label="Show more">
            <Round $size={16} $bg={lightDisc}><Caret dir="up" fill="#222" /></Round>
          </button>
          <button type="button" aria-label="Pattern window">
            <svg width="36" height="36" viewBox="0 0 36 36" aria-hidden="true">
              <rect x="1.5" y="1.5" width="33" height="33" rx="4" fill="#8f8f8f" stroke="#1c1c1c" strokeWidth="2" />
              <rect x="10" y="10" width="16" height="16" fill="#000" />
            </svg>
          </button>
        </StopColumn>
        <Transport>
          <TransportRow $columns="repeat(5, 50px) 1fr">
            <TransportButton type="button" aria-label="Stop">
              <Round $bg={lightDisc}><Glyph><rect x="3.5" y="3.5" width="9" height="9" fill="#2a2a2a" stroke="none" /></Glyph></Round>
            </TransportButton>
            <TransportButton type="button" aria-label="Play">
              <Round $bg={lightDisc}><Glyph><path d="M4 2l9 6-9 6z" fill="#2a2a2a" stroke="none" /></Glyph></Round>
            </TransportButton>
            <TransportButton type="button" aria-label="Read series">
              <Round $bg={lightDisc}>
                <Glyph>
                  <path d="M4 2H1.5v12H4M12 2h2.5v12H12" />
                  <path d="M4 8h2M7 8h2M10 8h2" />
                </Glyph>
              </Round>
            </TransportButton>
            <TransportButton type="button" aria-label="Read continuously">
              <Round $bg={lightDisc}>
                <Glyph>
                  <circle cx="4.5" cy="8" r="3" />
                  <circle cx="11.5" cy="8" r="3" />
                </Glyph>
              </Round>
            </TransportButton>
            <TransportButton type="button" aria-label="Refresh" $off>
              <Round $bg="#484848">
                <Glyph><path d="M2.5 7a5.5 5.5 0 0 1 10-2M13.5 9a5.5 5.5 0 0 1-10 2M13 1.5v4H9M3 14.5v-4h4" stroke="#151515" /></Glyph>
              </Round>
            </TransportButton>
            <TransportButton type="button" aria-label="More" $off><Round $bg="#303030" /></TransportButton>
          </TransportRow>
          <TransportRow $columns="154px 1fr">
            <StepButton type="button">
              <Round $bg={lightDisc}><Glyph><path d="M8 2L3 8l5 6M13 2L8 8l5 6" /></Glyph></Round>
              Back
            </StepButton>
            <StepButton type="button" $forward>
              Next
              <Round $bg={lightDisc}><Glyph><path d="M3 2l5 6-5 6M8 2l5 6-5 6" /></Glyph></Round>
            </StepButton>
          </TransportRow>
        </Transport>
      </Bottom>
    </Page>
  );
}
